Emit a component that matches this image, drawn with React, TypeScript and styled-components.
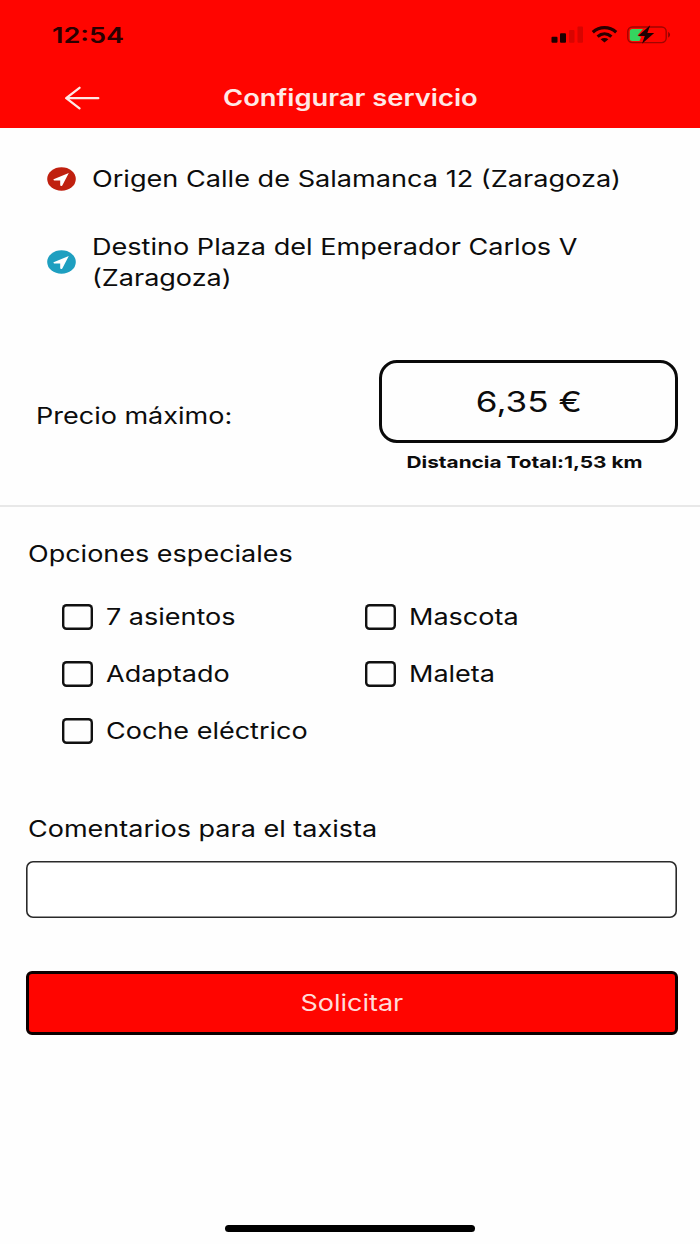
import React from 'react';
import styled, { createGlobalStyle } from 'styled-components';

const GlobalStyle = createGlobalStyle`
  *, *::before, *::after { box-sizing: border-box; }
  body {
    margin: 0;
    background: #fefefe;
    font-family: Inter, "Liberation Sans", sans-serif;
    color: #0c0c0c;
  }
`;

const Screen = styled.div`
  width: 700px;
  height: 1244px;
  display: flex;
  flex-direction: column;
  background: #fefefe;
  overflow: hidden;
`;

const Header = styled.header`
  flex: none;
  height: 128px;
  background: #ff0500;
`;

const StatusBar = styled.div`
  height: 67px;
  padding: 3px 28px 0 52px;
  display: flex;
  align-items: center;
  justify-content: space-between;
`;

const NavBar = styled.div`
  height: 61px;
  padding-left: 64px;
  display: flex;
  align-items: center;
`;

/* Wide lettering: glyphs are stretched sideways from the chosen edge. */
const Text = styled.span<{
  $size?: number;
  $weight?: number;
  $stretch?: number;
  $color?: string;
  $origin?: 'left' | 'center';
}>`
  display: inline-block;
  white-space: nowrap;
  line-height: 31px;
  font-size: ${(p) => p.$size ?? 22.5}px;
  font-weight: ${(p) => p.$weight ?? 400};
  color: ${(p) => p.$color ?? 'inherit'};
  transform: scaleX(${(p) => p.$stretch ?? 1.2});
  transform-origin: ${(p) => p.$origin ?? 'left'} center;
`;

const BackButton = styled.button`
  width: 36px;
  height: 24px;
  padding: 0;
  border: 0;
  background: none;
  display: flex;
`;

const Title = styled.h1`
  margin: 0 0 0 123px;
  display: flex;
`;

const Route = styled.section`
  padding: 35px 20px 0 47px;
  display: flex;
  flex-direction: column;
  gap: 37px;
`;

const Stop = styled.div`
  display: flex;
  align-items: center;
  gap: 16px;
`;

const StopLines = styled.div`
  display: flex;
  flex-direction: column;
`;

const Fare = styled.section`
  height: 214px;
  padding: 67px 22px 0 36px;
  display: flex;
  justify-content: space-between;
  border-bottom: 2px solid #e8e8e8;
`;

const FareLabel = styled.div`
  padding-top: 40px;
`;

const FareColumn = styled.div`
  width: 299px;
  display: flex;
  flex-direction: column;
  align-items: center;
`;

const PriceBox = styled.div`
  width: 100%;
  height: 83px;
  border: 3px solid #0a0a0a;
  border-radius: 18px;
  display: flex;
  align-items: center;
  justify-content: center;
`;

const Distance = styled.div`
  margin-top: 4px;
  padding-right: 8px;
`;

const Options = styled.section`
  padding: 31px 0 0 28px;
`;

const OptionGrid = styled.div`
  margin-top: 19px;
  padding-left: 34px;
  display: grid;
  grid-template-columns: 303px 1fr;
  grid-auto-rows: 57px;
`;

const Option = styled.label`
  height: 57px;
  display: flex;
  align-items: center;
  gap: 13px;
`;

const Checkbox = styled.input`
  appearance: none;
  margin: 0;
  width: 30.5px;
  height: 26px;
  border-radius: 4.5px;
  box-shadow: inset 0 0 0 2.4px #111;
`;

const Comments = styled.section`
  padding: 54px 22px 0 26px;
`;

const CommentLabel = styled.label`
  display: flex;
  padding-left: 2px;
`;

const CommentInput = styled.input`
  display: block;
  width: 651px;
  height: 57px;
  margin-top: 16.5px;
  border: 0;
  border-radius: 7px;
  background: #fff;
  box-shadow: inset 0 0 0 1.6px #2a2a2a;
`;

const SubmitButton = styled.button`
  width: 652px;
  height: 64px;
  margin: 53.5px 0 0 26px;
  padding: 0 0 1px;
  border: 3px solid #0d0000;
  border-radius: 6px;
  background: #ff0500;
  font-family: inherit;
  display: flex;
  align-items: center;
  justify-content: center;
`;

const HomeIndicator = styled.div`
  width: 250px;
  height: 7px;
  margin: auto auto 12px;
  border-radius: 4px;
  background: #000;
`;

const StatusIcons = () => (
  <svg width="122" height="20" viewBox="550 25 122 20">
    <rect x="551.5" y="36.8" width="6" height="6" rx="1" fill="#1c0000" />
    <rect x="560" y="33.3" width="6" height="9.5" rx="1" fill="#1c0000" />
    <rect x="569" y="30" width="5.5" height="12.8" rx="1" fill="#d80400" />
    <rect x="577.5" y="26.5" width="5.5" height="16.3" rx="1" fill="#d80400" />
    <g fill="none" stroke="#2a0000" strokeWidth="3.2">
      <path d="M592.8 32.2C599.6 26.1 609.4 26.1 616.2 32.2" />
      <path d="M597.6 36.6C601.8 33 607.2 33 611.4 36.6" />
    </g>
    <path d="M600.6 39.3C603 37.7 606 37.7 608.4 39.3L604.5 42.6Z" fill="#2a0000" />
    <rect x="627.8" y="27" width="38.4" height="15.6" rx="4.5" fill="none" stroke="#a00500" strokeWidth="1.4" />
    <path d="M632.3 29H643L637.5 35.5L641 37L639.5 41H632.3Q629.8 41 629.8 38.5V31.5Q629.8 29 632.3 29Z" fill="#35d45f" />
    <path d="M650.2 25.2L638 35.9H644.8L642 43.8L654.2 33H647.4Z" fill="#1c0000" />
    <path d="M668.2 31.8Q672 34.8 668.2 37.8Z" fill="#8a0400" />
  </svg>
);

const BackArrow = () => (
  <svg width="36" height="24" viewBox="0 0 36 24" fill="none" stroke="#ffe9e6" strokeWidth="2.3" strokeLinecap="round" strokeLinejoin="round">
    <path d="M34.3 12.2H2.5M15.5 1.8L2.2 12.2L15.5 22.4" />
  </svg>
);

const StopIcon = ({ color }: { color: string }) => (
  <svg width="29" height="24" viewBox="0 0 29 24">
    <ellipse cx="14.5" cy="12" rx="14.3" ry="11.8" fill={color} />
    <path d="M21.8 6L6.6 12.3Q6 13.3 7.2 13.6H13.2V18.6Q14.2 19.6 15.3 18.5Z" fill="#fff" />
  </svg>
);

const options = ['7 asientos', 'Mascota', 'Adaptado', 'Maleta', 'Coche eléctrico'];

export default function App() {
  return (
    <>
      <GlobalStyle />
      <Screen>
        <Header>
          <StatusBar>
            <Text $size={21} $weight={600} $stretch={1.29} $color="#2a0000">12:54</Text>
            <StatusIcons />
          </StatusBar>
          <NavBar>
            <BackButton aria-label="Volver"><BackArrow /></BackButton>
            <Title>
              <Text $weight={600} $stretch={1.215} $color="#ffe9e6">Configurar servicio</Text>
            </Title>
          </NavBar>
        </Header>

        <Route>
          <Stop>
            <StopIcon color="#c0200f" />
            <Text $stretch={1.205}>Origen Calle de Salamanca 12 (Zaragoza)</Text>
          </Stop>
          <Stop>
            <StopIcon color="#1e9fc0" />
            <StopLines>
              <Text $stretch={1.203}>Destino Plaza del Emperador Carlos V</Text>
              <Text>(Zaragoza)</Text>
            </StopLines>
          </Stop>
        </Route>

        <Fare>
          <FareLabel><Text>Precio máximo:</Text></FareLabel>
          <FareColumn>
            <PriceBox><Text $size={29} $stretch={1.21} $origin="center">6,35 €</Text></PriceBox>
            <Distance>
              <Text $size={16.5} $weight={700} $stretch={1.262} $origin="center">Distancia Total:1,53 km</Text>
            </Distance>
          </FareColumn>
        </Fare>

        <Options>
          <Text>Opciones especiales</Text>
          <OptionGrid>
            {options.map((label) => (
              <Option key={label}>
                <Checkbox type="checkbox" />
                <Text>{label}</Text>
              </Option>
            ))}
          </OptionGrid>
        </Options>

        <Comments>
          <CommentLabel htmlFor="comments"><Text>Comentarios para el taxista</Text></CommentLabel>
          <CommentInput id="comments" />
        </Comments>

        <SubmitButton>
          <Text $origin="center" $color="#ffdcd8">Solicitar</Text>
        </SubmitButton>

        <HomeIndicator />
      </Screen>
    </>
  );
}
